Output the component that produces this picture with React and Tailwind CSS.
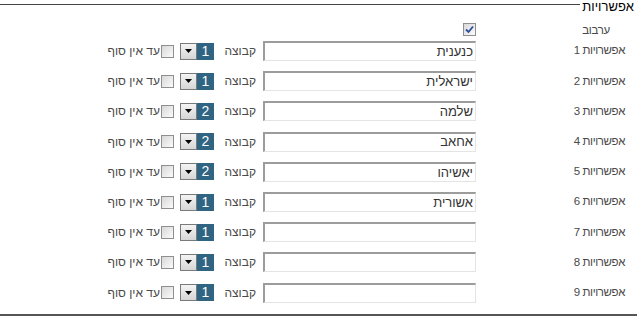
import React from "react";

const rows = [
  { n: 1, v: "כנענית", g: 1 },
  { n: 2, v: "ישראלית", g: 1 },
  { n: 3, v: "שלמה", g: 2 },
  { n: 4, v: "אחאב", g: 2 },
  { n: 5, v: "יאשיהו", g: 2 },
  { n: 6, v: "אשורית", g: 1 },
  { n: 7, v: "", g: 1 },
  { n: 8, v: "", g: 1 },
  { n: 9, v: "", g: 1 },
];

function Check({ checked }) {
  return (
    <span className="inline-flex h-[13px] w-[13px] items-center justify-center border border-[#8f8f8f] bg-gradient-to-br from-[#d8d8d8] to-[#fbfbfb]">
      {checked && (
        <svg width="9" height="9" viewBox="0 0 9 9">
          <path d="M1 4.5 L3.5 7 L8 1.5" fill="none" stroke="#2b4e9a" strokeWidth="1.8" />
        </svg>
      )}
    </span>
  );
}

export default function App() {
  return (
    <div
      dir="rtl"
      className="relative flex h-[324px] w-[637px] flex-col overflow-hidden bg-white font-['Liberation_Sans',Arial,sans-serif] text-[12px] text-[#4a4a4a]"
    >
      <div className="flex h-[16px] items-start">
        <span className="mr-[3px] text-[13px] leading-[13px] text-black">אפשרויות</span>
        <div className="mr-[2px] mt-[4px] h-[1px] flex-1 bg-[#444]" />
      </div>
      <div className="flex h-[20px] items-start">
        <div className="w-[161px] pr-[27px] pt-[7px] text-[11.5px] leading-[14px] tracking-[-0.3px]">ערבוב</div>
        <div className="mt-[7px] flex">
          <Check checked />
        </div>
      </div>
      {rows.map((r) => (
        <div key={r.n} className="flex h-[30.2px] items-center">
          <div className="w-[161px] pr-[12px] text-[11.5px] tracking-[-0.4px]">אפשרויות {r.n}</div>
          <div className="flex h-[20px] w-[213px] items-center border-b border-l-2 border-r border-t-2 border-b-[#e4e4e4] border-l-[#9c9c9c] border-r-[#e4e4e4] border-t-[#9c9c9c] bg-white pr-[2px] text-[13px] text-[#333]">
            {r.v}
          </div>
          <div className="mr-[7px] w-[34px]">קבוצה</div>
          <div className="mr-[8px] flex h-[17px] w-[17px] items-center justify-center bg-[#2f6482] text-[14px] text-white">
            {r.g}
          </div>
          <div className="flex h-[17px] w-[17px] items-center justify-center border border-[#7a7a7a] bg-gradient-to-b from-[#f4f4f4] to-[#d6d6d6]">
            <svg width="7" height="4" viewBox="0 0 7 4">
              <path d="M0 0 L7 0 L3.5 4 Z" fill="#000" />
            </svg>
          </div>
          <div className="mr-[6px] flex">
            <Check />
          </div>
          <div className="mr-[1px]">עד אין סוף</div>
        </div>
      ))}
      <div className="absolute bottom-[8px] left-0 h-[2px] w-full bg-[#555]" />
    </div>
  );
}
